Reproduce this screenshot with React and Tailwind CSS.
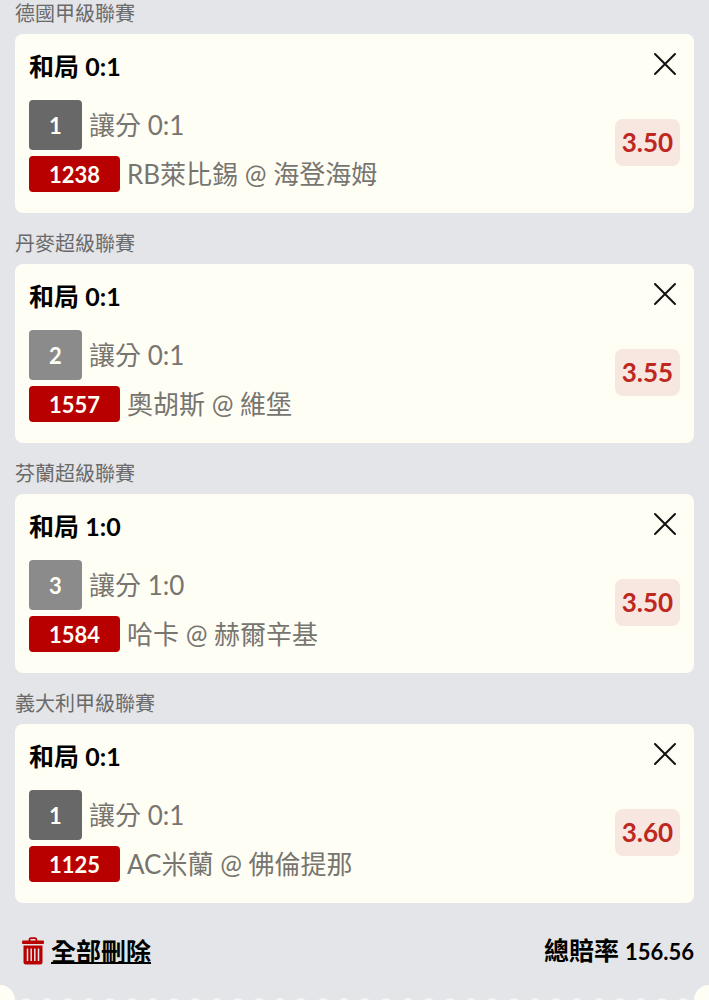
import React, { useState } from 'react'

const BETS = [
  { id: 1238, league: '德國甲級聯賽', pick: '和局', score: '0:1', tag: '1', tagColor: 'bg-[#686868]', market: '讓分 0:1', match: 'RB萊比錫 @ 海登海姆', odds: '3.50' },
  { id: 1557, league: '丹麥超級聯賽', pick: '和局', score: '0:1', tag: '2', tagColor: 'bg-[#8b8b8b]', market: '讓分 0:1', match: '奧胡斯 @ 維堡', odds: '3.55' },
  { id: 1584, league: '芬蘭超級聯賽', pick: '和局', score: '1:0', tag: '3', tagColor: 'bg-[#8b8b8b]', market: '讓分 1:0', match: '哈卡 @ 赫爾辛基', odds: '3.50' },
  { id: 1125, league: '義大利甲級聯賽', pick: '和局', score: '0:1', tag: '1', tagColor: 'bg-[#686868]', market: '讓分 0:1', match: 'AC米蘭 @ 佛倫提那', odds: '3.60' },
]

function TrashIcon() {
  return (
    <svg width="22" height="28" viewBox="0 0 22 28" fill="none" aria-hidden="true">
      <path d="M7.5 4.5V2.8Q7.5 1.2 9 1.2H13Q14.5 1.2 14.5 2.8V4.5" stroke="#b80000" strokeWidth="1.8" />
      <rect y="3.5" width="22" height="3.5" rx="1" fill="#b80000" />
      <path d="M1.5 8.5H20.5V25Q20.5 27.5 18 27.5H4Q1.5 27.5 1.5 25Z" fill="#b80000" />
      <path d="M5.5 11.5V24M9.2 11.5V24M12.8 11.5V24M16.5 11.5V24" stroke="#e4e5e8" strokeWidth="1.5" />
    </svg>
  )
}

function BetCard({ bet, onRemove }) {
  return (
    <section>
      <h2 className="pt-[18px] pb-[9px] text-[20px] leading-6 text-[#6a6a6a]">{bet.league}</h2>
      <div className="flex justify-between rounded-lg bg-[#fffef5] px-[14px] pt-4 pb-[21px]">
        <div>
          <h3 className="text-[25px] leading-8 font-semibold text-black">
            {bet.pick} <span className="font-bold">{bet.score}</span>
          </h3>
          <div className="mt-[18px] flex items-center gap-[7px]">
            <span className={`flex h-[50px] w-[53px] items-center justify-center rounded text-[22px] font-bold text-[#fffef5] ${bet.tagColor}`}>
              {bet.tag}
            </span>
            <span className="text-[26px] leading-8 text-[#777570]">{bet.market}</span>
          </div>
          <div className="mt-[6px] flex items-center gap-[7px]">
            <span className="flex h-9 w-[91px] items-center justify-center rounded bg-[#b80000] text-[22px] font-bold text-[#fffef5]">
              {bet.id}
            </span>
            <span className="text-[26px] leading-8 text-[#777570]">{bet.match}</span>
          </div>
        </div>
        <div className="flex flex-col items-end">
          <button type="button" aria-label="刪除" onClick={() => onRemove(bet.id)} className="mt-[2px] mr-[3px]">
            <svg width="24" height="24" viewBox="0 0 24 24" fill="none" stroke="#111" strokeWidth="2" strokeLinecap="round" aria-hidden="true">
              <path d="M2 2L22 22M22 2L2 22" />
            </svg>
          </button>
          <span className="mt-[43px] flex h-[47px] w-[65px] items-center justify-center rounded-lg bg-[#f8e6e0] text-[26px] font-bold text-[#bd2820]">
            {bet.odds}
          </span>
        </div>
      </div>
    </section>
  )
}

export default function App() {
  const [bets, setBets] = useState(BETS)

  return (
    <div className="min-h-screen overflow-hidden bg-[#e4e5e8] font-[Lato,'Noto_Sans_CJK_TC',sans-serif]">
      <main className="-mt-[17px] px-[15px]">
        {bets.map(bet => (
          <BetCard key={bet.id} bet={bet} onRemove={id => setBets(bets.filter(b => b.id !== id))} />
        ))}
        <div className="flex h-[82px] items-center justify-between pt-[13px] pl-[7px] text-black">
          <button type="button" onClick={() => setBets([])} className="flex items-center gap-[7px]">
            <TrashIcon />
            <span className="text-[25px] leading-8 font-bold underline decoration-2 underline-offset-1">全部刪除</span>
          </button>
          <p className="flex items-baseline gap-[6px] font-bold">
            <span className="text-[25px] leading-8">總賠率</span>
            <span className="text-[22px] leading-8">156.56</span>
          </p>
        </div>
      </main>
      {/* perforated top edge of the ticket */}
      <div className="flex h-[15px] items-end justify-between overflow-hidden">
        <span className="size-[15px] rounded-tr-[15px] bg-[#fffef5]" />
        <div className="flex h-[2px] flex-1 justify-around overflow-hidden">
          {Array.from({ length: 32 }, (_, i) => (
            <span key={i} className="h-3 w-3 rounded-full bg-[#f5f5f1]" />
          ))}
        </div>
        <span className="size-[15px] rounded-tl-[15px] bg-[#fffef5]" />
      </div>
    </div>
  )
}
